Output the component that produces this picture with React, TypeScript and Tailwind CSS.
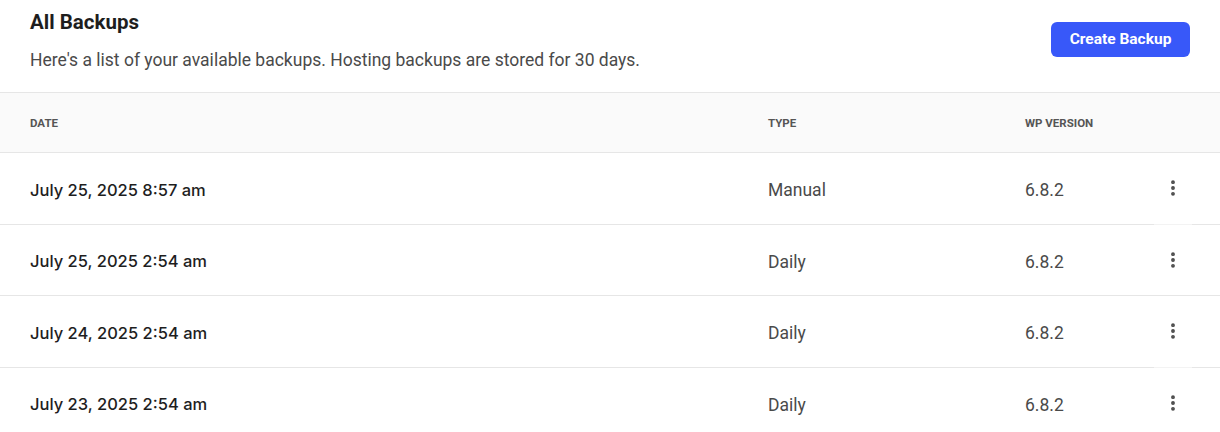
import { EllipsisVertical } from "lucide-react"

const backups = [
  { date: "July 25, 2025 8:57 am", type: "Manual", version: "6.8.2", faint: true },
  { date: "July 25, 2025 2:54 am", type: "Daily", version: "6.8.2", faint: false },
  { date: "July 24, 2025 2:54 am", type: "Daily", version: "6.8.2", faint: true },
  { date: "July 23, 2025 2:54 am", type: "Daily", version: "6.8.2", faint: false },
]

const App = () => {
  return (
    <div className="min-h-screen bg-white font-['Roboto',sans-serif] text-[#1e1e1e]">
      {/* Heading */}
      <div className="flex h-[92px] items-start justify-between px-[30px] pt-[10px]">
        <div className="flex flex-col gap-[14px]">
          <h2 className="text-[20.5px] leading-[24px] font-bold text-[#1e1e1e]">All Backups</h2>
          <p className="text-[17.5px] leading-[25px] text-[#4a4a4a]">
            Here's a list of your available backups. Hosting backups are stored for 30 days.
          </p>
        </div>
        <button className="mt-[12px] h-[35px] w-[139px] rounded-[6px] bg-[#3858f9] text-[15.5px] font-bold text-white">
          Create Backup
        </button>
      </div>

      {/* Table */}
      <div className="border-t border-[#e6e6e6]">
        <div className="grid h-[60px] grid-cols-[768px_257px_129px_1fr] items-center border-b border-[#e6e6e6] bg-[#fafafa] pt-[2px] text-[11.5px] font-bold uppercase text-[#555]">
          <div className="pl-[30px]">Date</div>
          <div>Type</div>
          <div>WP Version</div>
          <div />
        </div>

        {backups.map((b, i) => (
          <div
            key={i}
            className="grid h-[71.5px] grid-cols-[768px_257px_129px_1fr] items-center"
          >
            <div className="flex h-full items-center border-b border-[#e6e6e6] pt-[4px] pl-[30px] font-['Inter',sans-serif] text-[16.5px] font-medium text-[#1e1e1e]">
              {b.date}
            </div>
            <div className="flex h-full items-center border-b border-[#e6e6e6] pt-[4px] text-[17.5px] text-[#4a4a4a]">
              {b.type}
            </div>
            <div className="flex h-full items-center border-b border-[#e6e6e6] pt-[4px] text-[17.5px] text-[#4a4a4a]">
              {b.version}
            </div>
            <div className="flex h-full items-center">
              <div className={`flex h-full w-[38px] items-center justify-center border-b ${b.faint ? "border-[#f3f3f3]" : "border-[#e6e6e6]"}`}>
                <EllipsisVertical size={20} strokeWidth={2.6} className="text-[#4a4a4a]" />
              </div>
              <div className="h-full flex-1 border-b border-[#e6e6e6]" />
            </div>
          </div>
        ))}
      </div>
    </div>
  )
}

export default App
